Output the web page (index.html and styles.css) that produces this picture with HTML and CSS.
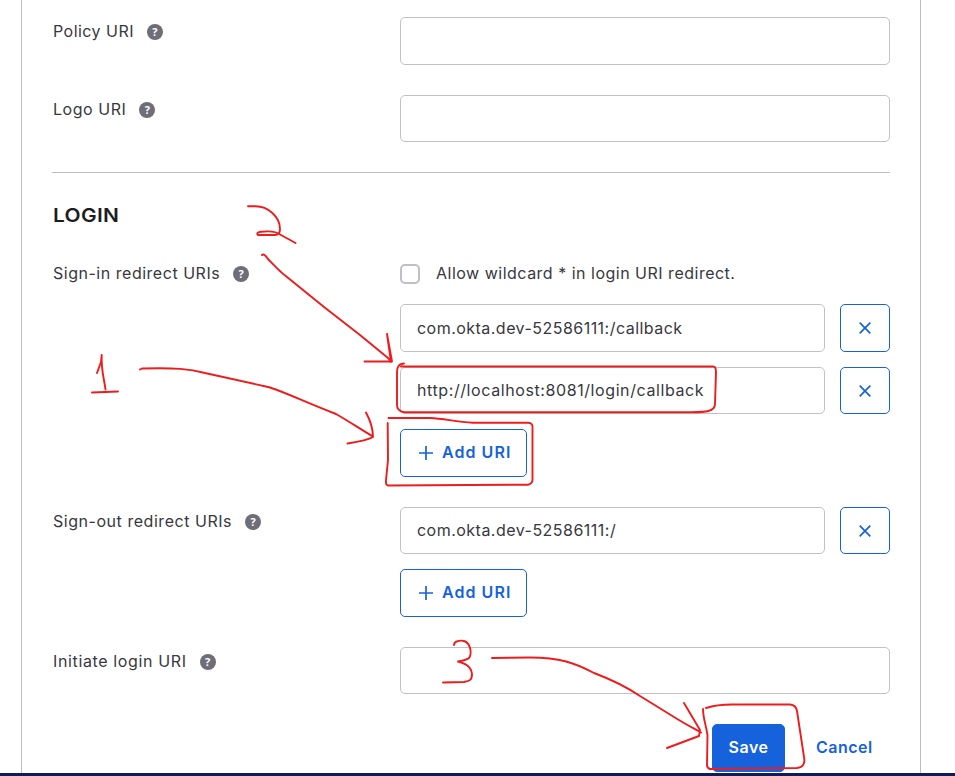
FILE: index.html
```html
<!DOCTYPE html>
<html lang="en">
<head>
<meta charset="utf-8">
<title>Application settings</title>
<link rel="stylesheet" href="styles.css">
</head>
<body>
<main class="panel">
  <div class="row">
    <div class="label"><span class="t-policy">Policy URI</span><i class="help">?</i></div>
    <div class="field"></div>
  </div>
  <div class="row row-logo">
    <div class="label"><span class="t-logo">Logo URI</span><i class="help">?</i></div>
    <div class="field short"></div>
  </div>
  <h2>LOGIN</h2>
  <div class="row row-signin">
    <div class="label"><span class="t-signin">Sign-in redirect URIs</span><i class="help">?</i></div>
    <div class="stack">
      <div class="check"><span class="box"></span><span class="t-allow">Allow wildcard * in login URI redirect.</span></div>
      <div class="entry"><div class="field"><span class="t-uri1">com.okta.dev-52586111:/callback</span></div><button class="remove"><svg viewBox="0 0 12 12"><path d="M.7.7l10.600 10.600M11.300.7L.7 11.300"/></svg></button></div>
      <div class="entry"><div class="field short"><span class="t-uri2">http://localhost:8081/login/callback</span></div><button class="remove short"><svg viewBox="0 0 12 12"><path d="M.7.7l10.600 10.600M11.300.7L.7 11.300"/></svg></button></div>
      <button class="add"><svg viewBox="0 0 14 14"><path d="M7 0v14M0 7h14"/></svg><span>Add URI</span></button>
    </div>
  </div>
  <div class="row row-signout">
    <div class="label"><span class="t-signout">Sign-out redirect URIs</span><i class="help">?</i></div>
    <div class="stack">
      <div class="entry"><div class="field short"><span class="t-uri3">com.okta.dev-52586111:/</span></div><button class="remove short"><svg viewBox="0 0 12 12"><path d="M.7.7l10.600 10.600M11.300.7L.7 11.300"/></svg></button></div>
      <button class="add"><svg viewBox="0 0 14 14"><path d="M7 0v14M0 7h14"/></svg><span>Add URI</span></button>
    </div>
  </div>
  <div class="row row-init">
    <div class="label"><span class="t-init">Initiate login URI</span><i class="help">?</i></div>
    <div class="field short"></div>
  </div>
  <div class="actions"><button class="save"><span>Save</span></button><button class="cancel"><span>Cancel</span></button></div>
</main>
<div class="taskbar"></div>
<svg class="ink" viewBox="0 0 955 776">
  <path d="M248 206.300H255C268 206 280 217 280 229C280 234 278 235 275 235H258C256 233 258 231.500 265 231.500C272 231 277 232 281 235L295.500 243"/>
  <path d="M262 255Q264 253 268 259C274 265 280 272 287 277L324 307L360 335L388 358L391 361M364.500 361.500H392L387 334L391 362L389.500 348"/>
  <path d="M97 373L101 362L101.700 355C101 370 104 378 105.500 389.500M92 392.500L118 391.500"/>
  <path d="M140 369.500L142 368.500C175 367.500 190 369 205 373L268 387C280 390 305 402 336 414C350 422 360 429 373 436.500M366 412.500C370 420 373 430 373 437C368 440 357 442 347.500 443.500"/>
  <path d="M404 363.500L400 364.500Q397 367 397 372V405Q397 411 404 412.300H690C705 412 715 412 715 404L716 372Q716 366.500 713 366.500H401"/>
  <path d="M388.500 418H430C445 418.500 455 422 473 422.700H528Q533 423 532.500 428V478Q533 484 528 484.700L388 485.500Q385.500 485 386 480L388 460L387.700 423"/>
  <path d="M454 645C454 641 460 640 464 641C471 643 472 654 469 658C467 660 461 661 458 661.500C466 664 471 666 472 674C472 680 470 681 464 682L443 682.500"/>
  <path d="M492 658L530 657.500C560 657.500 575 663 594 673C610 679 625 686 640 696L674 717C685 724 695 729 701 732.500M684 703L700 730L699 736L667 748"/>
  <path d="M706 708C715 705 720 704.500 732 704.500H790Q796 705 797 711L804 757Q806 767 797 768L710 769Q707 768 707 765L707.500 735C706 725 703 718 703 709"/>
</svg>
</body>
</html>
```
FILE: styles.css
```css
* { box-sizing: border-box; }
body { margin: 0; height: 776px; overflow: hidden; position: relative; background: #fff; color: #38383e; font: 16px/24px Inter, "Liberation Sans", sans-serif; }
.panel { margin: 0 34px 0 21px; height: 773px; padding: 17px 30px 0; border: solid #bebec2; border-width: 0 1px; overflow: hidden; }
.row { display: grid; grid-template-columns: 348px 490px; align-items: start; }
.label { display: flex; align-items: center; gap: 13px; height: 24px; padding-left: 1px; margin-top: 3px; white-space: nowrap; }
.label span, .check .t-allow, .short span { margin-bottom: 2px; }
.help { width: 16px; height: 16px; margin-top: -1px; border-radius: 50%; background: #6e6e78; color: #fff; font: bold 11px/16px "Open Sans", sans-serif; text-align: center; }
.field { height: 48px; border: 1px solid #c1c1c8; border-radius: 5px; display: flex; align-items: center; padding-left: 16px; flex: 1; white-space: nowrap; }
.short { height: 47px; }
.t-policy { letter-spacing: .46px; }
.t-logo { letter-spacing: .53px; }
.t-signin { letter-spacing: .52px; }
.t-signout { letter-spacing: .54px; }
.t-init { letter-spacing: .63px; }
.t-allow { letter-spacing: .5px; }
.t-uri1 { letter-spacing: .47px; }
.t-uri2 { letter-spacing: .59px; }
.t-uri3 { letter-spacing: .48px; }
.row-logo { margin-top: 30px; padding-bottom: 30px; border-bottom: 1px solid #bebec2; }
h2 { margin: 31px 0 0 1px; font: 600 19px/24px Inter, sans-serif; letter-spacing: .3px; transform: scaleX(1.1); transform-origin: left; color: #1d1d21; }
.row-signin { margin-top: 36px; }
.row-signin > .label { margin-top: -2px; }
.row-signout, .row-init { margin-top: 30px; }
.stack { display: flex; flex-direction: column; gap: 15px; align-items: flex-start; }
.check { display: flex; align-items: center; gap: 16px; height: 20px; margin-bottom: 5px; white-space: nowrap; }
.box { width: 20px; height: 20px; border: 2px solid #bfbfc7; border-radius: 5px; }
.entry { display: flex; gap: 15px; width: 490px; }
button { font: 600 16px/24px Inter, sans-serif; color: #1662dd; background: #fff; padding: 0; display: flex; align-items: center; justify-content: center; border: 1px solid #1662dd; border-radius: 5px; }
button span { margin-bottom: 2px; letter-spacing: .5px; }
.remove { width: 50px; height: 48px; }
.remove.short { height: 47px; }
.remove svg { width: 12px; height: 12px; }
.add { width: 127px; height: 48px; justify-content: flex-start; padding-left: 18px; gap: 9px; }
.add span { letter-spacing: 1.05px; }
.add svg { width: 14px; height: 14px; }
svg path { fill: none; stroke: #1662dd; stroke-width: 1.7; }
.actions { display: flex; margin: 30px 0 0 660px; }
.save { width: 73px; height: 48px; color: #fff; background: #1662dd; }
.cancel { height: 48px; margin-left: 30px; border-color: transparent; background: none; }
.taskbar { height: 3px; background: #101b58; }
.ink { position: absolute; inset: 0; width: 955px; height: 776px; pointer-events: none; }
.ink path { stroke: #ee1c1c; stroke-width: 1.9; stroke-linecap: round; stroke-linejoin: round; }
```
